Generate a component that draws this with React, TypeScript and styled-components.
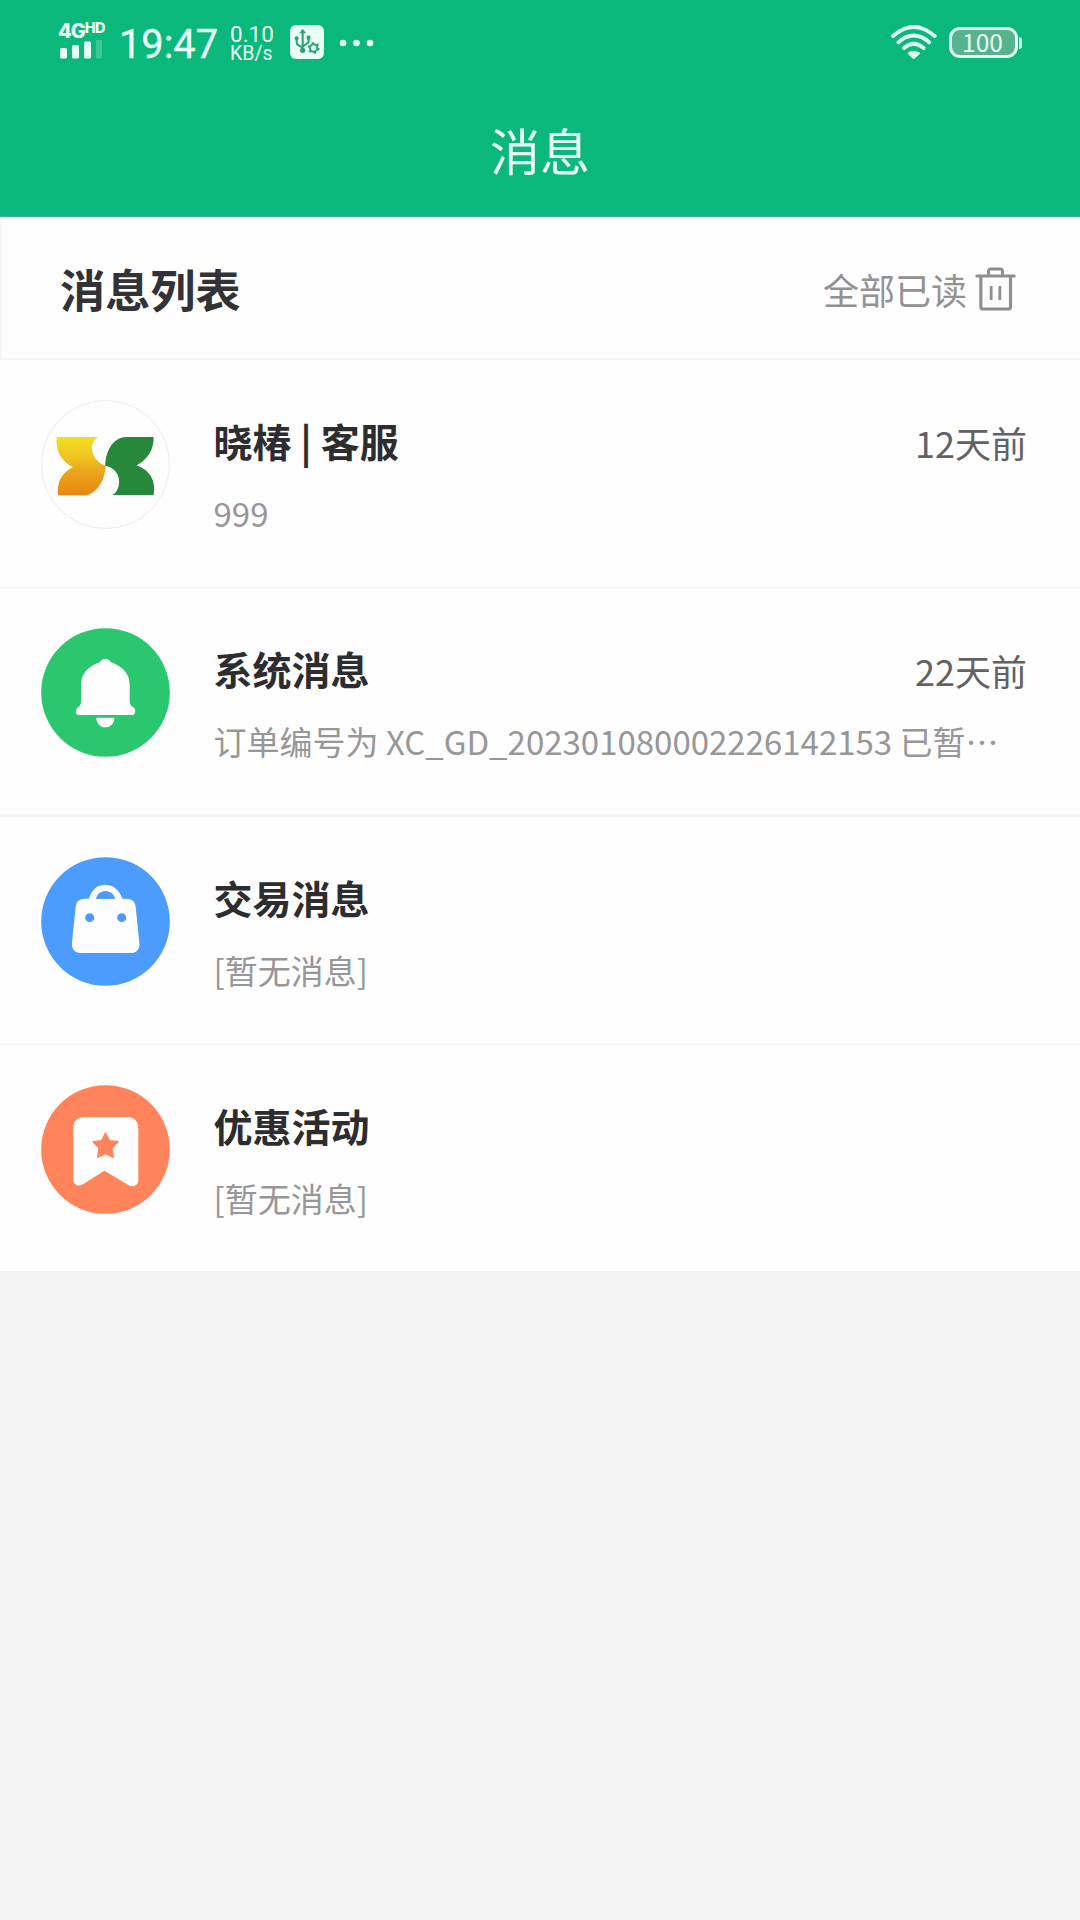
import React from "react";
import styled, { createGlobalStyle } from "styled-components";

const Global = createGlobalStyle`
  * { box-sizing: border-box; }
  html, body { margin: 0; padding: 0; background: #f4f4f5; }
  body { font-family: "Noto Sans CJK SC", "Noto Sans", sans-serif; }
  svg { display: block; flex: none; }
`;

const Page = styled.div`
  width: 1080px;
  height: 1920px;
  overflow: hidden;
  background: #f4f4f5;
  display: flex;
  flex-direction: column;
`;

const Header = styled.header`
  height: 217px;
  flex: none;
  background: #0bb87b;
  color: #eafff5;
  display: flex;
  flex-direction: column;
  border-bottom: 1px solid #3cb389;
`;

const StatusBar = styled.div`
  height: 86px;
  padding: 0 58px 0 58px;
  display: flex;
  justify-content: space-between;
  font-family: Roboto, sans-serif;
`;

const StatusGroup = styled.div`
  display: flex;
  align-items: flex-start;
`;

const Signal = styled.div`
  width: 61px;
  padding-top: 22px;
`;

const Network = styled.div`
  display: flex;
  align-items: flex-start;
  height: 18px;
  font: 800 20px/18px Inter, sans-serif;
  letter-spacing: -1.1px;
`;

const NetworkSup = styled.span`
  font-size: 14.5px;
  line-height: 11px;
  letter-spacing: -0.6px;
`;

const Clock = styled.div`
  width: 111px;
  padding-top: 21px;
  font-size: 39.8px;
  line-height: 48px;
  -webkit-text-stroke: 0.3px currentColor;
`;

const Rate = styled.div`
  width: 60px;
  padding-top: 24px;
  display: flex;
  flex-direction: column;
  font-size: 22.5px;
  line-height: 21px;
`;

const RateUnit = styled.span`
  font-size: 19.5px;
  line-height: 17px;
`;

const IconSlot = styled.div<{ $top: number; $right?: number }>`
  padding-top: ${(p) => p.$top}px;
  padding-right: ${(p) => p.$right ?? 0}px;
`;

const Battery = styled.div`
  display: flex;
  align-items: center;
  padding-top: 27px;
`;

const BatteryBody = styled.div`
  width: 69px;
  height: 31px;
  border: 3px solid #e2fff3;
  border-radius: 11px;
  background: #57b38d;
  display: flex;
  align-items: center;
  justify-content: center;
  font: 400 24.5px/24px "Noto Sans CJK SC", sans-serif;
  padding: 0 2px 2px 0;
`;

const BatteryTip = styled.div`
  width: 3px;
  height: 12px;
  margin-left: 1px;
  border-radius: 0 3px 3px 0;
  background: #cdf7e5;
`;

const Title = styled.h1`
  margin: 0;
  height: 130px;
  display: flex;
  align-items: center;
  justify-content: center;
  font-size: 50px;
  font-weight: 400;
  line-height: 72px;
  padding-bottom: 4px;
`;

const ListHead = styled.div`
  height: 143px;
  flex: none;
  padding: 2px 64px 0 58px;
  display: flex;
  align-items: center;
  justify-content: space-between;
  background: #fefefe;
  border: solid #f5f4f6;
  border-width: 0 0 2px 2px;
`;

const ListTitle = styled.h2`
  margin: 0;
  font-size: 45.2px;
  line-height: 64px;
  font-weight: 700;
  color: #333236;
`;

const ReadAll = styled.div`
  display: flex;
  align-items: center;
  gap: 8px;
  font-size: 36px;
  line-height: 52px;
  color: #929193;
`;

const List = styled.div`
  display: flex;
  flex-direction: column;
  flex: none;
  height: 911px;
`;

const Row = styled.div`
  flex: 1;
  display: flex;
  padding: 39.5px 53px 0 41px;
  background: #fefefe;
  &:not(:last-child) {
    border-bottom: 3px solid #f5f5f6;
  }
`;

const Content = styled.div`
  flex: 1;
  min-width: 0;
  margin-left: 43.5px;
  display: flex;
  flex-direction: column;
`;

const RowTop = styled.div`
  display: flex;
  justify-content: space-between;
  align-items: flex-start;
  height: 56px;
  margin-top: 12px;
`;

const Name = styled.div`
  font-size: 39px;
  line-height: 56px;
  font-weight: 700;
  color: #2d2c2f;
  white-space: pre;
`;

const Time = styled.div`
  padding-top: 2px;
  font-size: 36px;
  line-height: 56px;
  color: #626163;
`;

const Preview = styled.div`
  margin-top: 21px;
  font-size: 33px;
  line-height: 48px;
  color: #979698;
  white-space: nowrap;
`;

const SignalBars = () => (
  <svg width="46" height="19" viewBox="0 0 46 19" fill="#e6fff4">
    <rect x="2" y="8" width="7" height="10.500" rx="1.500" />
    <rect x="14" y="5" width="7" height="13.500" rx="1.500" />
    <rect x="26" y="1.500" width="7" height="17" rx="1.500" />
    <rect x="38" y="-1" width="6" height="19.500" rx="1.500" opacity=".22" />
  </svg>
);

const UsbIcon = () => (
  <svg width="34" height="34" viewBox="0 0 102 102" fill="none">
    <rect width="102" height="102" rx="18" fill="#e9fff6" />
    <g stroke="#2ba377" strokeWidth="6.500" strokeLinecap="round" strokeLinejoin="round">
      <path d="M38 20v54M20 42v10q0 6 6 9l12 7M56 40v8q0 5-5 8l-13 8" />
    </g>
    <g fill="#2ba377">
      <path d="M38 11l10 14H28z" />
      <circle cx="38" cy="76" r="8" />
      <circle cx="20" cy="40" r="6" />
      <rect x="50" y="32" width="11" height="11" />
    </g>
    <circle cx="71" cy="69" r="17" fill="#e9fff6" />
    <circle cx="71" cy="69" r="11" stroke="#2ba377" strokeWidth="6" />
    <circle cx="71" cy="69" r="15.280" stroke="#2ba377" strokeWidth="5" strokeDasharray="7 9" />
  </svg>
);

const Dots = () => (
  <svg width="36" height="8" viewBox="0 0 36 8" fill="#e4fff4">
    <circle cx="4" cy="4" r="3.300" />
    <circle cx="17.500" cy="4" r="3.300" />
    <circle cx="31" cy="4" r="3.300" />
  </svg>
);

const WifiIcon = () => (
  <svg width="46" height="35" viewBox="94 74 138 105" fill="none" stroke="#e2fff3" strokeWidth="11.500" strokeLinecap="round">
    <path d="M100 107Q162 53 225 107" />
    <path d="M116 126Q162 85 209 126" />
    <path d="M133 143Q162 118 192 143" />
    <path d="M147 159Q162 149 178 159L162 173z" fill="#e2fff3" strokeWidth="6" strokeLinejoin="round" />
  </svg>
);

const TrashIcon = () => (
  <svg width="41" height="44" viewBox="524 80 122 132" fill="none" stroke="#8f8e90" strokeLinejoin="round" strokeLinecap="round">
    <path strokeWidth="9.500" d="M529 107H641M541 107V199q0 7 7 7H623q7 0 7-7V107" />
    <path strokeWidth="9" d="M564 105V93q0-7 7-7H599q7 0 7 7V105" />
    <path strokeWidth="8.500" strokeLinecap="butt" d="M572 137V179M598 137V179" />
  </svg>
);

const LogoAvatar = () => (
  <svg width="129" height="129" viewBox="64 59 387 387">
    <defs>
      <linearGradient id="gold" x1="0" y1="0" x2="0" y2="1">
        <stop offset="0" stopColor="#f3df20" />
        <stop offset=".35" stopColor="#f0c421" />
        <stop offset=".6" stopColor="#e9a51c" />
        <stop offset="1" stopColor="#ea8610" />
      </linearGradient>
    </defs>
    <circle cx="257.500" cy="252.500" r="192" fill="#fefefe" stroke="#efeaf3" strokeWidth="3" />
    <path fill="url(#gold)" d="M111 170H235C220 181 214 196 218 213C224 238 241 250 258 257C257 291 239 334 201 345H115C111 307 124 279 160 260C124 243 107 211 111 170Z" />
    <path fill="#27883b" d="M257 257C256 224 274 170 321 170H402C403 208 384 237 351 255C392 270 409 302 402 344H279C293 334 300 318 298 299C296 277 279 260 257 257Z" />
  </svg>
);

const BellAvatar = () => (
  <svg width="129" height="129" viewBox="64 54 387 387">
    <circle cx="257.500" cy="247.500" r="193" fill="#2bc76e" />
    <path fill="#fefefe" d="M257 146C264 146 269 149 274 157C306 168 330 190 330 224V272C330 282 333 287 341 292C346 296 348 302 346 308C345 313 341 315 336 315H179C174 315 170 313 169 308C168 302 170 296 175 292C182 287 184 282 184 272V224C184 190 208 168 240 157C245 149 250 146 257 146Z" />
    <path fill="#fefefe" d="M230 323H284C284 339 273 352 257 352C241 352 230 339 230 323Z" />
  </svg>
);

const BagAvatar = () => (
  <svg width="129" height="129" viewBox="64 49 387 387">
    <circle cx="257.500" cy="242.500" r="193" fill="#4b9cfd" />
    <path fill="none" stroke="#fefefe" strokeWidth="20" d="M216 180C224 153 238 142 257 142C276 142 290 153 300 180" />
    <path fill="#fefefe" d="M196 174H320C337 174 346 182 348 198L359 306C361 325 351 337 333 337H184C166 337 155 325 157 306L168 198C170 182 179 174 196 174Z" />
    <circle cx="210" cy="231" r="13.500" fill="#4b9cfd" />
    <circle cx="306" cy="231" r="13.500" fill="#4b9cfd" />
    <path fill="#4b9cfd" d="M230 174C233 159 243 152 257 152C271 152 282 159 286 174Z" />
  </svg>
);

const BookmarkAvatar = () => (
  <svg width="129" height="129" viewBox="64 44 387 387">
    <circle cx="257.500" cy="237.500" r="193" fill="#ff835b" />
    <path fill="#fefefe" d="M194 140H321C343 140 356 152 356 174V329C356 345 342 352 327 345L254 301L190 342C175 351 161 343 161 327V174C161 152 173 140 194 140Z" />
    <path fill="#ff835b" stroke="#ff835b" strokeWidth="4" strokeLinejoin="round" d="M257.500 188L269 211L295 214L277 233L281 261L257.500 250L234 261L238 233L220 214L246 211Z" />
  </svg>
);

const messages = [
  { name: "晓椿 | 客服", text: "999", time: "12天前", Avatar: LogoAvatar },
  { name: "系统消息", text: "订单编号为 XC_GD_202301080002226142153 已暂⋯", time: "22天前", Avatar: BellAvatar },
  { name: "交易消息", text: "[暂无消息]", time: "", Avatar: BagAvatar },
  { name: "优惠活动", text: "[暂无消息]", time: "", Avatar: BookmarkAvatar },
];

export default function App() {
  return (
    <Page>
      <Global />
      <Header>
        <StatusBar>
          <StatusGroup>
            <Signal>
              <Network>4G<NetworkSup>HD</NetworkSup></Network>
              <SignalBars />
            </Signal>
            <Clock>19:47</Clock>
            <Rate>0.10<RateUnit>KB/s</RateUnit></Rate>
            <IconSlot $top={25} $right={15}><UsbIcon /></IconSlot>
            <IconSlot $top={39}><Dots /></IconSlot>
          </StatusGroup>
          <StatusGroup>
            <IconSlot $top={25} $right={12}><WifiIcon /></IconSlot>
            <Battery>
              <BatteryBody>100</BatteryBody>
              <BatteryTip />
            </Battery>
          </StatusGroup>
        </StatusBar>
        <Title>消息</Title>
      </Header>
      <ListHead>
        <ListTitle>消息列表</ListTitle>
        <ReadAll>全部已读<TrashIcon /></ReadAll>
      </ListHead>
      <List>
        {messages.map(({ name, text, time, Avatar }) => (
          <Row key={name}>
            <Avatar />
            <Content>
              <RowTop>
                <Name>{name}</Name>
                <Time>{time}</Time>
              </RowTop>
              <Preview>{text}</Preview>
            </Content>
          </Row>
        ))}
      </List>
    </Page>
  );
}
